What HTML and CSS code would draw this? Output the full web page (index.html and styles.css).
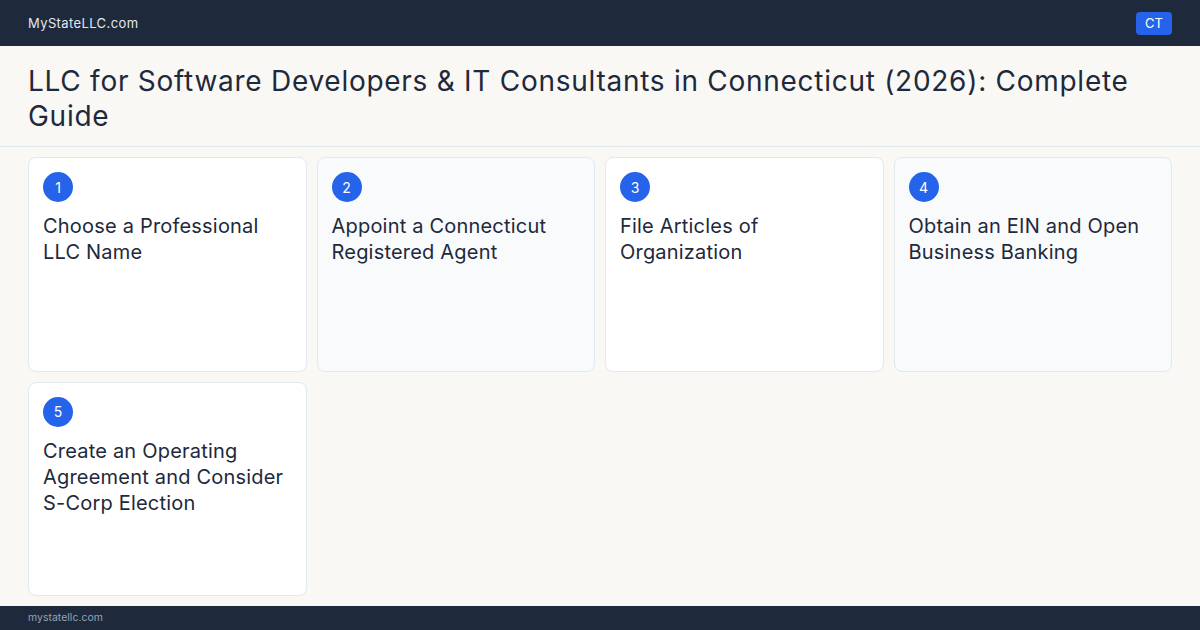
FILE: index.html
```html
<!DOCTYPE html>
<html lang="en">
<head>
    <meta charset="UTF-8">
    <meta name="viewport" content="width=device-width, initial-scale=1.0">
    <title>LLC for Software Developers &amp; IT Consultants in Connecticut</title>
    <link rel="stylesheet" href="styles.css">
</head>
<body>

<div class="page">
    <div class="topbar">
        <span class="brand">MyStateLLC.com</span>
        <span class="state">CT</span>
    </div>

    <div class="title-area">
        <h1>LLC for Software Developers &amp; IT Consultants in Connecticut (2026): Complete Guide</h1>
    </div>

    <div class="steps">
        <div class="step">
            <div class="num">1</div>
            <h2>Choose a Professional LLC Name</h2>
        </div>
        <div class="step alt">
            <div class="num">2</div>
            <h2>Appoint a Connecticut Registered Agent</h2>
        </div>
        <div class="step">
            <div class="num">3</div>
            <h2>File Articles of Organization</h2>
        </div>
        <div class="step alt">
            <div class="num">4</div>
            <h2>Obtain an EIN and Open Business Banking</h2>
        </div>
        <div class="step">
            <div class="num">5</div>
            <h2>Create an Operating Agreement and Consider S-Corp Election</h2>
        </div>
    </div>

    <div class="footer">mystatellc.com</div>
</div>

</body>
</html>
```

FILE: styles.css
```css
body {
    font-family: Inter, "Noto Sans", sans-serif;
    background-color: #f9f8f5;
    margin: 0;
    color: #1e293b;
}
.page {
    display: flex;
    flex-direction: column;
    height: 100vh;
}
.topbar {
    height: 46px;
    background-color: #1e293b;
    display: flex;
    align-items: center;
    justify-content: space-between;
    padding: 0 28px;
}
.brand {
    color: #e2e8f0;
    font-size: 13px;
    letter-spacing: 0.03em;
}
.state {
    background-color: #2563eb;
    color: #fff;
    font-size: 13px;
    padding: 3px 9px;
    border-radius: 4px;
    line-height: 17px;
}
.title-area {
    padding: 18px 28px 12px;
    border-bottom: 1px solid #e2e8f0;
}
.title-area h1 {
    margin: 0;
    font-size: 28px;
    font-weight: 400;
    line-height: 35px;
    letter-spacing: 0.026em;
}
.steps {
    flex: 1;
    display: grid;
    grid-template-columns: repeat(4, 1fr);
    grid-template-rows: 1fr 1fr;
    gap: 10px;
    padding: 10px 28px;
    min-height: 0;
}
.step {
    background-color: #fff;
    border: 1px solid #e2e8f0;
    border-radius: 8px;
    padding: 14px;
}
.step.alt {
    background-color: #f8fafc;
}
.num {
    width: 30px;
    height: 30px;
    border-radius: 50%;
    background-color: #2563eb;
    color: #fff;
    font-size: 14px;
    display: flex;
    align-items: center;
    justify-content: center;
}
.step h2 {
    margin: 11px 0 0;
    font-size: 20px;
    font-weight: 400;
    line-height: 26px;
    letter-spacing: 0.01em;
}
.footer {
    height: 24px;
    background-color: #1e293b;
    color: #94a3b8;
    font-size: 10.5px;
    line-height: 24px;
    padding: 0 28px;
}
```
